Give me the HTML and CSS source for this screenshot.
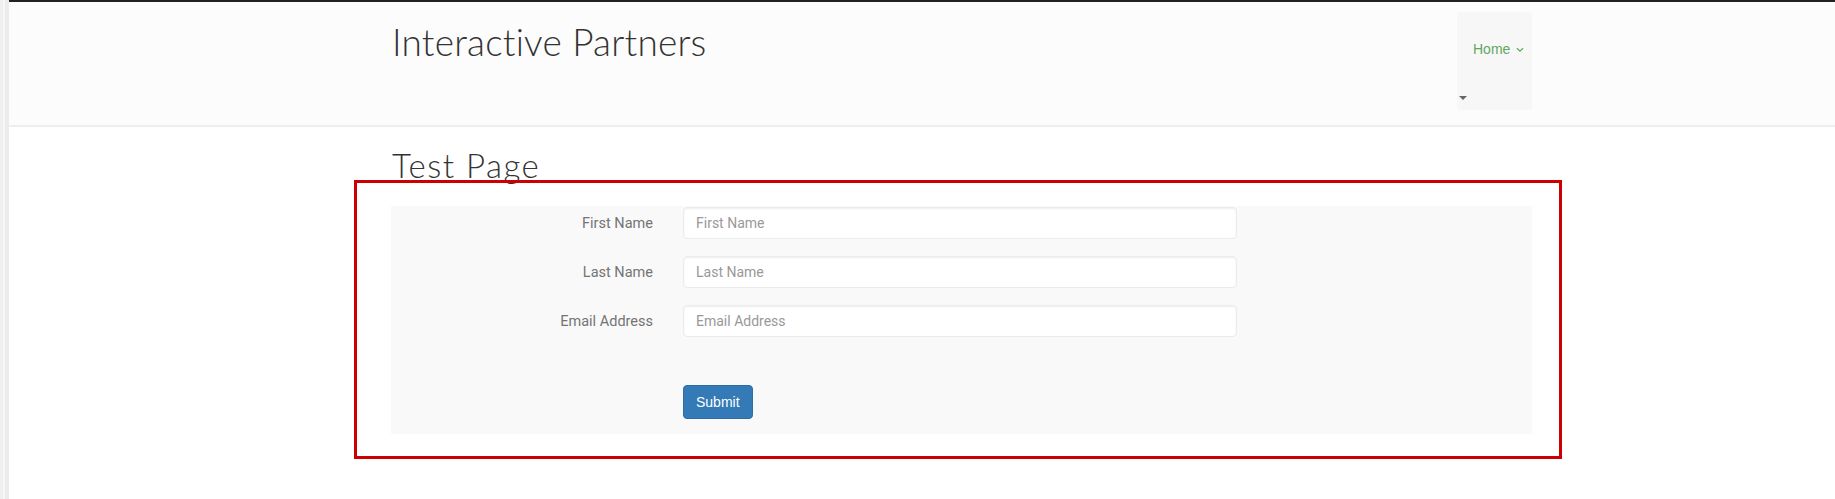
FILE: index.html
```html
<!DOCTYPE html>
<html lang="en">
<head>
<meta charset="utf-8">
<title>Test Page - Interactive Partners</title>
<link rel="stylesheet" href="styles.css">
</head>
<body>
<div class="frame">
  <div class="side"></div>
  <div class="page">
    <header class="site-header">
      <div class="container header-row">
        <div class="brand">Interactive Partners</div>
        <nav class="nav-box">
          <a class="nav-link" href="#">Home
            <svg class="chev" width="8" height="6" viewBox="0 0 8 6"><path d="M1 1.2 L4 4.2 L7 1.2" fill="none" stroke="#5fa85f" stroke-width="1.3"/></svg>
          </a>
          <span class="caret"></span>
        </nav>
      </div>
    </header>
    <main class="container main">
      <h1 class="page-title">Test Page</h1>
      <form class="form-panel">
        <div class="form-row">
          <label class="form-label" for="fn">First Name</label>
          <input class="form-input" id="fn" type="text" placeholder="First Name">
        </div>
        <div class="form-row">
          <label class="form-label" for="ln">Last Name</label>
          <input class="form-input" id="ln" type="text" placeholder="Last Name">
        </div>
        <div class="form-row">
          <label class="form-label" for="em">Email Address</label>
          <input class="form-input" id="em" type="text" placeholder="Email Address">
        </div>
        <div class="form-row submit-row">
          <span class="form-label"></span>
          <button class="btn-submit" type="button">Submit</button>
        </div>
      </form>
      <div class="highlight"></div>
    </main>
  </div>
</div>
</body>
</html>
```
FILE: styles.css
```css
html, body {
  margin: 0;
  padding: 0;
  background: #ffffff;
}
body {
  font-family: Roboto, "Liberation Sans", sans-serif;
  height: 499px;
  overflow: hidden;
}
.frame {
  display: flex;
  height: 499px;
}
.side {
  width: 9px;
  flex: none;
  background: linear-gradient(to right, #efefef 0, #efefef 3px, #f7f7f7 3px, #f7f7f7 5px, #ececec 5px, #ececec 9px);
}
.page {
  flex: 1;
  border-top: 2px solid #222222;
  position: relative;
}
.container {
  margin-left: 383px;
  width: 1140px;
}
.site-header {
  background: #fcfcfc;
  height: 123px;
  border-bottom: 2px solid #eeeeee;
}
.header-row {
  display: flex;
  justify-content: space-between;
  align-items: flex-start;
}
.brand {
  font-family: Lato, "Open Sans", sans-serif;
  font-weight: 300;
  font-size: 37px;
  line-height: 40px;
  letter-spacing: 0.2px;
  color: #333333;
  margin-top: 20px;
}
.nav-box {
  margin-top: 10px;
  width: 75px;
  height: 98px;
  background: #f7f7f7;
  border-radius: 4px;
  position: relative;
}
.nav-link {
  display: flex;
  align-items: center;
  gap: 6px;
  font-family: "Liberation Sans", Arial, sans-serif;
  font-size: 14px;
  line-height: 20px;
  color: #5fa85f;
  text-decoration: none;
  padding: 27px 0 0 16px;
}
.chev {
  display: block;
  margin-top: 1px;
}
.caret {
  position: absolute;
  left: 2px;
  bottom: 10px;
  width: 0;
  height: 0;
  border-left: 4px solid transparent;
  border-right: 4px solid transparent;
  border-top: 4px solid #666666;
}
.main {
  position: relative;
  padding-top: 20px;
}
.page-title {
  font-family: Lato, "Open Sans", sans-serif;
  font-weight: 300;
  font-size: 33px;
  line-height: 36px;
  letter-spacing: 1.5px;
  color: #333333;
  margin: 0;
}
.form-panel {
  margin-top: 23px;
  margin-left: -1px;
  background: #f9f9f9;
  padding: 1px 0 15px 0;
  display: flex;
  flex-direction: column;
  gap: 17px;
}
.form-row {
  display: flex;
  align-items: center;
  gap: 30px;
}
.form-label {
  width: 262px;
  flex: none;
  text-align: right;
  font-size: 14.5px;
  color: #747474;
}
.form-input {
  width: 554px;
  height: 32px;
  box-sizing: border-box;
  border: 1px solid #ebebeb;
  border-radius: 4px;
  background: #ffffff;
  box-shadow: inset 0 1px 2px rgba(0,0,0,0.07);
  padding: 0 12px;
  font-family: Roboto, "Liberation Sans", sans-serif;
  font-size: 14px;
  color: #555555;
  margin: 0;
}
.form-input::placeholder {
  color: #999999;
}
.submit-row {
  margin-top: 31px;
}
.btn-submit {
  font-family: "Liberation Sans", Arial, sans-serif;
  font-size: 14px;
  line-height: 20px;
  padding: 6px 12px;
  color: #ffffff;
  background: #337ab7;
  border: 1px solid #2e6da4;
  border-radius: 4px;
  margin: 0;
}
.highlight {
  position: absolute;
  left: -38px;
  top: 53px;
  width: 1208px;
  height: 279px;
  box-sizing: border-box;
  border: 3px solid #cc0000;
  pointer-events: none;
}
```
